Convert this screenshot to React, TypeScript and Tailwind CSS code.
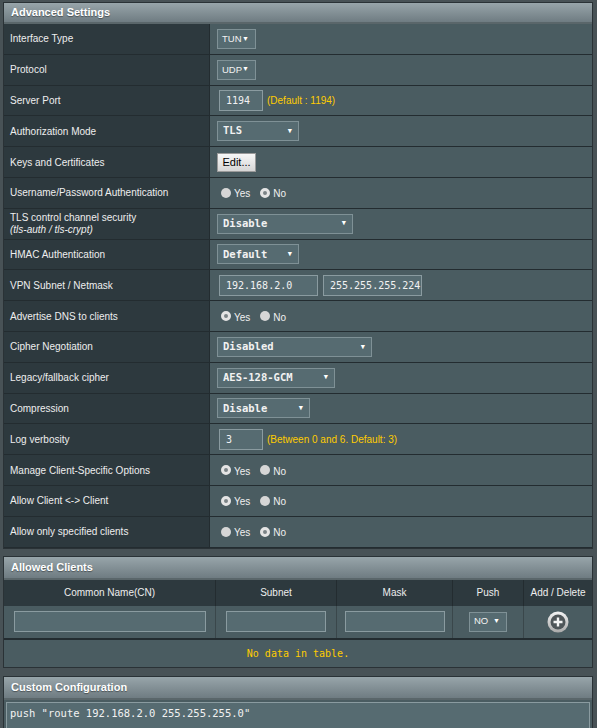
import React from 'react';

const SANS = { fontFamily: '"Liberation Sans", Arial, sans-serif' };
const MONO = { fontFamily: '"DejaVu Sans Mono", monospace' };

const Select: React.FC<{ text: string; w: number; mono?: boolean }> = ({ text, w, mono }) => (
  <div
    className="h-[20px] flex items-center justify-between pl-[4px] pr-[6px] bg-[#566b71] border border-[#7f9196] text-[#f2f2f2]"
    style={{ width: w, ...(mono ? MONO : SANS) }}
  >
    <span className={mono ? 'pl-[1px] text-[10.5px] font-semibold' : 'text-[9.5px]'}>{text}</span>
    <span className="text-[7px] text-white">▼</span>
  </div>
);

const Input: React.FC<{ text?: string; w: number }> = ({ text, w }) => (
  <div
    className="h-[21px] flex items-center px-[6px] bg-[#566b71] border border-[#8a9ba0] text-[#f2f2f2] text-[10px]"
    style={{ width: w, ...MONO }}
  >
    {text}
  </div>
);

const Radio: React.FC<{ on: boolean }> = ({ on }) =>
  on ? (
    <span className="inline-block w-[10px] h-[10px] rounded-full bg-[#7b8386] border-[3px] border-[#e4e4e4]" />
  ) : (
    <span className="inline-block w-[10px] h-[10px] rounded-full bg-[#d6d6d6]" />
  );

const YesNo: React.FC<{ yes: boolean }> = ({ yes }) => (
  <div className="flex items-center gap-[3px] pl-[4px] text-[10px] text-[#f0f0f0]" style={SANS}>
    <Radio on={yes} />
    <span className="mt-[2px]">Yes</span>
    <span className="w-[4px]" />
    <Radio on={!yes} />
    <span className="mt-[2px]">No</span>
  </div>
);

const Hint: React.FC<{ children: React.ReactNode }> = ({ children }) => (
  <span className="text-[10px] text-[#ffcc00] ml-[4px]" style={SANS}>
    {children}
  </span>
);

const Header: React.FC<{ title: string; tall?: boolean }> = ({ title, tall }) => (
  <div
    className={`${tall ? 'h-[23px]' : 'h-[21px]'} flex items-center pl-[7px] bg-gradient-to-b from-[#98a5aa] to-[#6f7c82] border-b-2 border-[#5a666a] text-white text-[11px] font-bold`}
    style={{ ...SANS, textShadow: '0 1px 1px rgba(0,0,0,0.4)' }}
  >
    {title}
  </div>
);

const rows: { label: React.ReactNode; value: React.ReactNode }[] = [
  { label: 'Interface Type', value: <Select text="TUN" w={39} /> },
  { label: 'Protocol', value: <Select text="UDP" w={39} /> },
  {
    label: 'Server Port',
    value: (
      <div className="flex items-center pl-[2px]">
        <Input text="1194" w={44} />
        <Hint>(Default : 1194)</Hint>
      </div>
    ),
  },
  { label: 'Authorization Mode', value: <Select text="TLS" w={82} mono /> },
  {
    label: 'Keys and Certificates',
    value: (
      <div
        className="h-[19px] w-[39px] flex items-center justify-center bg-gradient-to-b from-[#f7f7f7] to-[#d6d6d6] border border-[#9a9a9a] text-[11px] text-black"
        style={SANS}
      >
        Edit...
      </div>
    ),
  },
  { label: 'Username/Password Authentication', value: <YesNo yes={false} /> },
  {
    label: (
      <div className="leading-[12px]">
        <div>TLS control channel security</div>
        <div className="italic">(tls-auth / tls-crypt)</div>
      </div>
    ),
    value: <Select text="Disable" w={136} mono />,
  },
  { label: 'HMAC Authentication', value: <Select text="Default" w={82} mono /> },
  {
    label: 'VPN Subnet / Netmask',
    value: (
      <div className="flex items-center gap-[5px] pl-[2px]">
        <Input text="192.168.2.0" w={99} />
        <Input text="255.255.255.224" w={99} />
      </div>
    ),
  },
  { label: 'Advertise DNS to clients', value: <YesNo yes /> },
  { label: 'Cipher Negotiation', value: <Select text="Disabled" w={155} mono /> },
  { label: 'Legacy/fallback cipher', value: <Select text="AES-128-GCM" w={118} mono /> },
  { label: 'Compression', value: <Select text="Disable" w={93} mono /> },
  {
    label: 'Log verbosity',
    value: (
      <div className="flex items-center pl-[2px]">
        <Input text="3" w={44} />
        <Hint>(Between 0 and 6. Default: 3)</Hint>
      </div>
    ),
  },
  { label: 'Manage Client-Specific Options', value: <YesNo yes /> },
  { label: 'Allow Client <-> Client', value: <YesNo yes /> },
  { label: 'Allow only specified clients', value: <YesNo yes={false} /> },
];

const PlusIcon = () => (
  <svg width="22" height="22" viewBox="0 0 22 22">
    <defs>
      <linearGradient id="ring" x1="0" y1="0" x2="0" y2="1">
        <stop offset="0" stopColor="#f4f4f4" />
        <stop offset="1" stopColor="#a9a9a9" />
      </linearGradient>
    </defs>
    <circle cx="11" cy="11" r="10.5" fill="url(#ring)" />
    <circle cx="11" cy="11" r="7.5" fill="#4f5659" />
    <path d="M11 6.5v9M6.5 11h9" stroke="#f5f5f5" strokeWidth="2.4" />
  </svg>
);

export default function App() {
  return (
    <div className="w-[597px] h-[728px] overflow-hidden bg-[#485256] pt-[2px] px-[3px]" style={SANS}>
      <div className="w-[590px] border border-[#2a3236]">
        <Header title="Advanced Settings" />
        {rows.map((r, i) => (
          <div key={i} className="flex h-[30.8px] border-b border-[#232c30]">
            <div className="w-[206px] shrink-0 flex items-center pl-[6px] bg-[#2d393e] text-[10px] text-[#eeeeee] border-r border-[#232c30]">
              {r.label}
            </div>
            <div className="flex-1 flex items-center pl-[7px] bg-[#4a5c61]">{r.value}</div>
          </div>
        ))}
      </div>

      <div className="w-[590px] mt-[7px] border border-[#2a3236]">
        <Header title="Allowed Clients" tall />
        <div className="grid grid-cols-[212px_121px_116px_71px_1fr] h-[26px] bg-[#2d393e] text-[10px] text-[#eeeeee]">
          {['Common Name(CN)', 'Subnet', 'Mask', 'Push', 'Add / Delete'].map((h, i) => (
            <div key={h} className={`flex items-center justify-center ${i < 4 ? 'border-r border-[#232c30]' : ''}`}>
              {h}
            </div>
          ))}
        </div>
        <div className="grid grid-cols-[212px_121px_116px_71px_1fr] h-[34px] bg-[#4a5c61] border-b-2 border-[#232c30]">
          <div className="flex items-center justify-center border-r border-[#3a474b]">
            <Input w={192} />
          </div>
          <div className="flex items-center justify-center border-r border-[#3a474b]">
            <Input w={100} />
          </div>
          <div className="flex items-center justify-center border-r border-[#3a474b]">
            <Input w={100} />
          </div>
          <div className="flex items-center justify-center border-r border-[#3a474b]">
            <Select text="NO" w={38} />
          </div>
          <div className="flex items-center justify-center">
            <PlusIcon />
          </div>
        </div>
        <div className="h-[27px] flex items-center justify-center bg-[#4a5c61] text-[10px] text-[#ffcc00]" style={MONO}>
          No data in table.
        </div>
      </div>

      <div className="w-[590px] mt-[8px] border border-[#2a3236] bg-[#4a5c61] h-[60px]">
        <Header title="Custom Configuration" tall />
        <div className="p-[2px]">
          <div className="h-[40px] bg-[#566b71] border border-[#8a9ba0] px-[3px] pt-[3px] text-[10.5px] text-[#f2f2f2]" style={MONO}>
            push "route 192.168.2.0 255.255.255.0"
          </div>
        </div>
      </div>
    </div>
  );
}
